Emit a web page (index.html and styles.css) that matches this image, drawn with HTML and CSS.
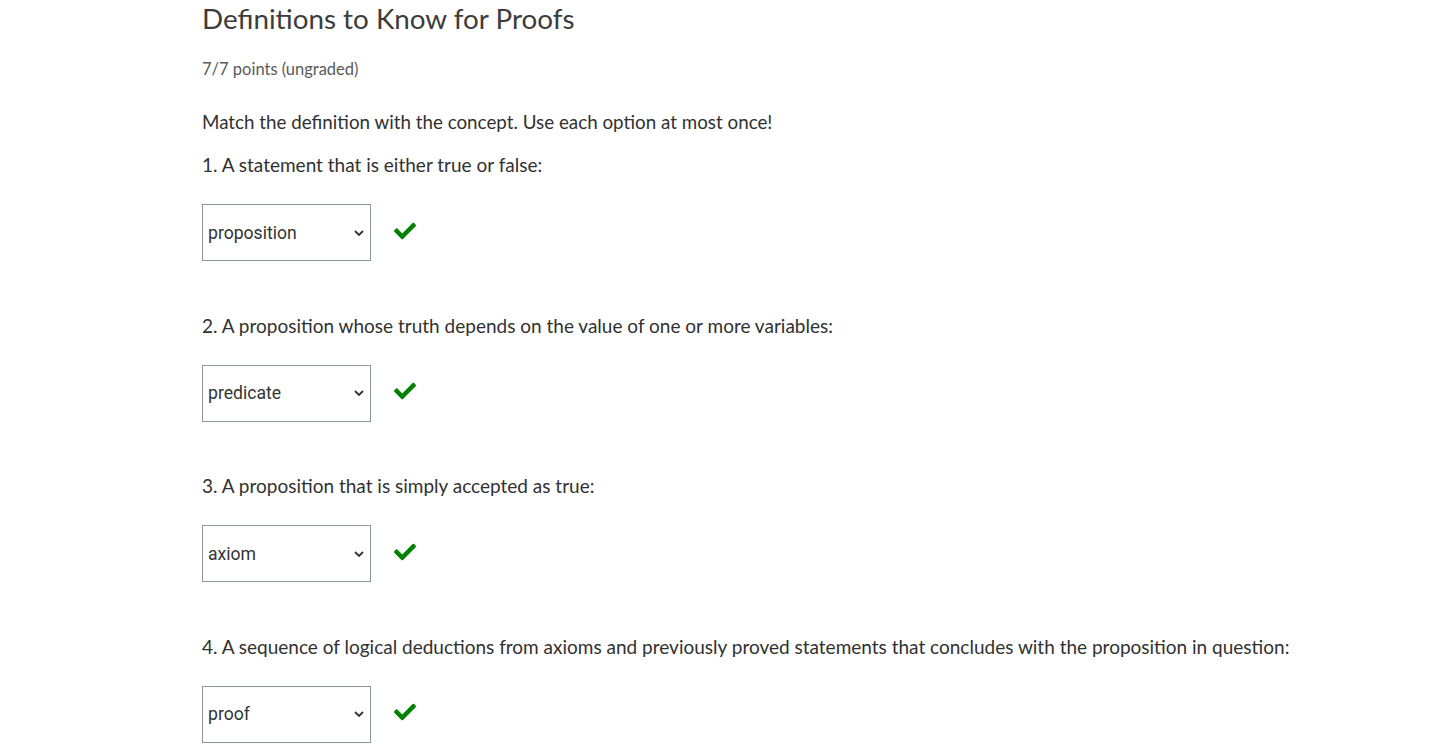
FILE: index.html
```html
<!DOCTYPE html>
<html>
<head>
<meta charset="utf-8">
<link rel="stylesheet" href="styles.css">
</head>
<body>
<div class="problem">
  <h2 class="title">Definitions to Know for Proofs</h2>
  <div class="points">7/7 points (ungraded)</div>
  <p class="intro">Match the definition with the concept. Use each option at most once!</p>

  <div class="q">
    <p class="qtext">1. A statement that is either true or false:</p>
    <div class="answer">
      <div class="select"><span>proposition</span><svg class="chev" viewBox="0 0 10 6" width="10" height="6"><path d="M1 1l4 4 4-4" fill="none" stroke="#333" stroke-width="1.8"/></svg></div>
      <svg class="check" viewBox="0 0 512 512" width="22" height="22"><path fill="#008100" d="M173.9 439.4L7.5 273c-10-10-10-26.2 0-36.2l36.2-36.2c10-10 26.2-10 36.2 0L192 312.7 432.1 72.6c10-10 26.2-10 36.2 0l36.2 36.2c10 10 10 26.2 0 36.2L210.1 439.4c-10 10-26.2 10-36.2 0z"/></svg>
    </div>
  </div>

  <div class="q">
    <p class="qtext">2. A proposition whose truth depends on the value of one or more variables:</p>
    <div class="answer">
      <div class="select"><span>predicate</span><svg class="chev" viewBox="0 0 10 6" width="10" height="6"><path d="M1 1l4 4 4-4" fill="none" stroke="#333" stroke-width="1.8"/></svg></div>
      <svg class="check" viewBox="0 0 512 512" width="22" height="22"><path fill="#008100" d="M173.9 439.4L7.5 273c-10-10-10-26.2 0-36.2l36.2-36.2c10-10 26.2-10 36.2 0L192 312.7 432.1 72.6c10-10 26.2-10 36.2 0l36.2 36.2c10 10 10 26.2 0 36.2L210.1 439.4c-10 10-26.2 10-36.2 0z"/></svg>
    </div>
  </div>

  <div class="q">
    <p class="qtext">3. A proposition that is simply accepted as true:</p>
    <div class="answer">
      <div class="select"><span>axiom</span><svg class="chev" viewBox="0 0 10 6" width="10" height="6"><path d="M1 1l4 4 4-4" fill="none" stroke="#333" stroke-width="1.8"/></svg></div>
      <svg class="check" viewBox="0 0 512 512" width="22" height="22"><path fill="#008100" d="M173.9 439.4L7.5 273c-10-10-10-26.2 0-36.2l36.2-36.2c10-10 26.2-10 36.2 0L192 312.7 432.1 72.6c10-10 26.2-10 36.2 0l36.2 36.2c10 10 10 26.2 0 36.2L210.1 439.4c-10 10-26.2 10-36.2 0z"/></svg>
    </div>
  </div>

  <div class="q">
    <p class="qtext">4. A sequence of logical deductions from axioms and previously proved statements that concludes with the proposition in question:</p>
    <div class="answer">
      <div class="select"><span>proof</span><svg class="chev" viewBox="0 0 10 6" width="10" height="6"><path d="M1 1l4 4 4-4" fill="none" stroke="#333" stroke-width="1.8"/></svg></div>
      <svg class="check" viewBox="0 0 512 512" width="22" height="22"><path fill="#008100" d="M173.9 439.4L7.5 273c-10-10-10-26.2 0-36.2l36.2-36.2c10-10 26.2-10 36.2 0L192 312.7 432.1 72.6c10-10 26.2-10 36.2 0l36.2 36.2c10 10 10 26.2 0 36.2L210.1 439.4c-10 10-26.2 10-36.2 0z"/></svg>
    </div>
  </div>
</div>
</body>
</html>
```
FILE: styles.css
```css
html, body {
  margin: 0;
  padding: 0;
  background: #fff;
}
body {
  font-family: "Lato", "Open Sans", sans-serif;
  color: #313131;
}
.problem {
  padding-left: 202px;
  padding-top: 0;
}
.title {
  margin: 0;
  font-weight: 400;
  font-size: 27.8px;
  line-height: 38px;
  color: #3c3c3c;
}
.points {
  margin-top: 21px;
  font-size: 16.5px;
  line-height: 20px;
  color: #5a5a5a;
}
.intro {
  margin: 31px 0 0;
  font-size: 18.8px;
  line-height: 24px;
}
.q .qtext {
  margin: 19px 0 0;
  font-size: 19px;
  line-height: 24px;
}
.q + .q .qtext {
  margin-top: 52.5px;
}
.answer {
  display: flex;
  align-items: center;
  gap: 23px;
  margin-top: 27px;
}
.select {
  box-sizing: border-box;
  width: 169px;
  height: 57px;
  border: 1px solid #8d969f;
  display: flex;
  align-items: center;
  justify-content: space-between;
  padding: 0 6px 0 5px;
  font-family: "Roboto", "Liberation Sans", sans-serif;
  font-size: 17.6px;
  color: #333;
}
.check {
  margin-top: -4px;
}
```
